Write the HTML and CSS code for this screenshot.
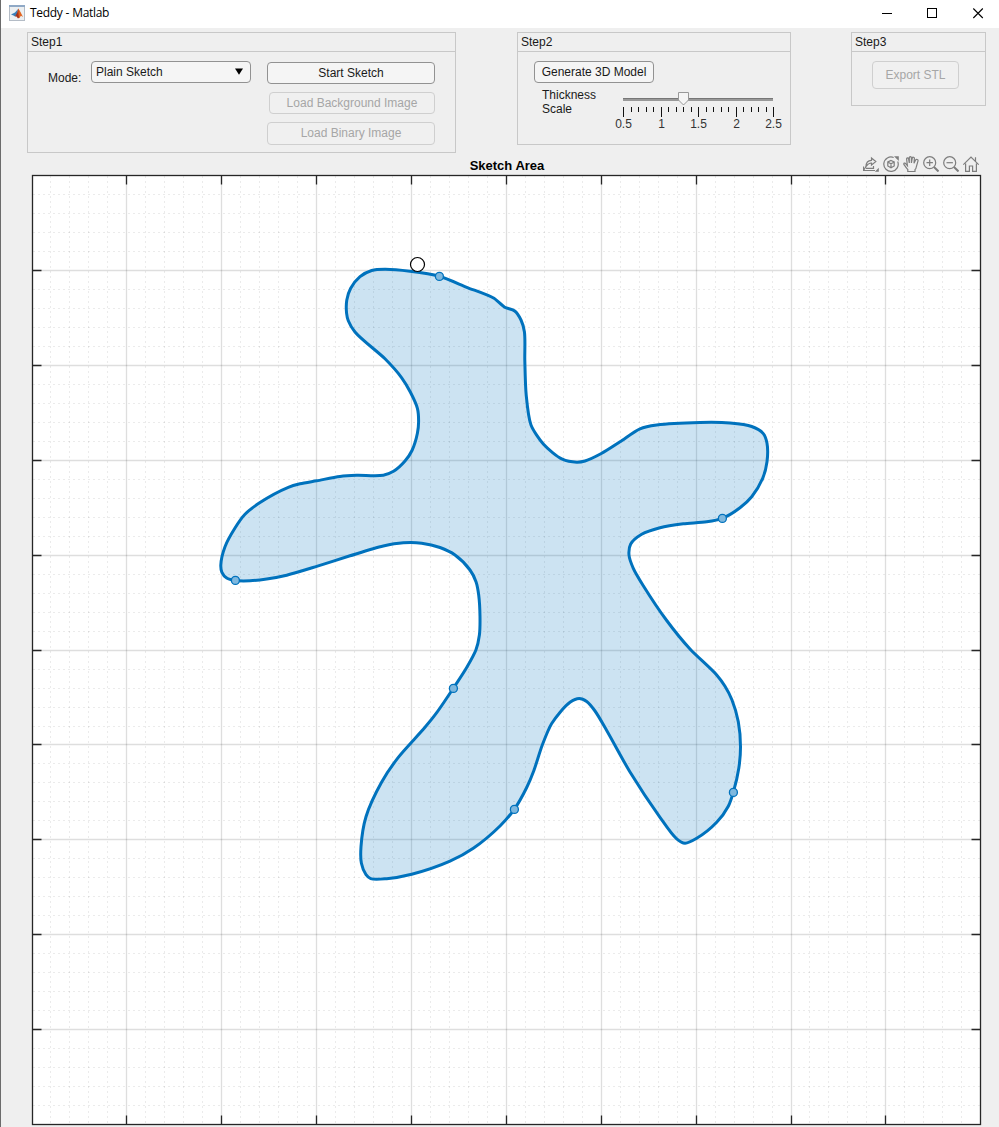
FILE: index.html
```html
<!DOCTYPE html>
<html lang="en">
<head>
    <meta charset="UTF-8">
    <title>Teddy - Matlab</title>
    <link rel="stylesheet" href="styles.css">
</head>
<body>

    <div class="window">
        <div class="titlebar">
            <svg class="app-icon" width="16" height="16" viewBox="0 0 16 16">
                <rect x="0.5" y="0.5" width="15" height="15" fill="#eceff1" stroke="#b4bcc6"/>
                <rect x="0" y="0" width="16" height="2" fill="#8fa9c6"/>
                <path d="M2 9.5 L6 7.5 L9 4 L8 10 L6 11.5 L4.5 10.5 Z" fill="#3b7fb8"/>
                <path d="M6 11.5 L8 8 L9.3 3.6 L10.5 6.5 L11 12 L9 13.5 L7.5 11.5 Z" fill="#a5331b"/>
                <path d="M9.3 3.6 L11.5 7 L14 12 L12 10.8 L10 13.3 L9.5 9 Z" fill="#e2641f"/>
            </svg>
            <span class="caption">Teddy - Matlab</span>
            <svg class="window-buttons" width="104" height="12" viewBox="0 0 104 12">
                <path d="M0 6.5 H10" stroke="#000"/>
                <rect x="45.5" y="1.5" width="9" height="9" fill="none" stroke="#000"/>
                <path d="M91.3 1.5 L100.8 11 M100.8 1.5 L91.3 11" stroke="#000" stroke-width="1.1"/>
            </svg>
        </div>

        <div class="panels">
            <div class="panel step1">
                <div class="panel-title">Step1</div>
                <div class="step1-body">
                    <label class="mode-label">Mode:</label>
                    <div class="dropdown">Plain Sketch
                        <svg width="8" height="7" viewBox="0 0 8 7"><path d="M0 0.5 H8 L4 6.8 Z"/></svg>
                    </div>
                    <div class="buttons">
                        <button>Start Sketch</button>
                        <button class="narrow" disabled>Load Background Image</button>
                        <button class="tall" disabled>Load Binary Image</button>
                    </div>
                </div>
            </div>

            <div class="panel step2">
                <div class="panel-title">Step2</div>
                <div class="step2-body">
                    <button class="generate">Generate 3D Model</button>
                    <div class="thickness">
                        <label>Thickness<br>Scale</label>
                        <svg class="slider" id="slider" width="176" height="42" viewBox="610 90 176 42">
                            <rect x="623" y="98" width="150" height="3" fill="#999"/>
                            <rect x="623" y="98" width="150" height="1" fill="#777"/>
                            <path d="M678.5 92.5 H688.5 V100 L683.5 105 L678.5 100 Z" fill="#f5f5f5" stroke="#999"/>
                        </svg>
                    </div>
                </div>
            </div>

            <div class="panel step3">
                <div class="panel-title">Step3</div>
                <button class="export" disabled>Export STL</button>
            </div>
        </div>

        <div class="axes-header">
            <div class="axes-title">Sketch Area</div>
            <div class="axes-toolbar">
                <!-- export -->
                <svg width="16" height="16" viewBox="0 0 16 16">
                    <path d="M0.5 10.5 V14.5 H12 M0.5 14.5 L3 10.5 M3 12.3 H10.5 V10"/>
                    <path d="M3 10.5 C3 6.5 5 4.5 8.5 4.3 V2 L12.8 5.6 L8.5 9 V7 C6 7 4.5 8.3 3 10.5 Z"/>
                    <path class="solid" d="M15.8 11.8 V15.8 H11.8 Z"/>
                </svg>
                <!-- rotate -->
                <svg width="16" height="16" viewBox="0 0 16 16">
                    <path d="M10.7 1.5 A7.2 7.2 0 1 0 14.7 5.5"/>
                    <path class="solid" d="M11 0.2 H15.8 V5 Z"/>
                    <path d="M8 4.5 L11.2 6 V10 L8 11.8 L4.8 10 V6 Z M4.8 6 L8 7.8 L11.2 6 M8 7.8 V11.8"/>
                </svg>
                <!-- pan -->
                <svg width="16" height="16" viewBox="0 0 16 16">
                    <path d="M4.8 15.5 V13.5 C3.5 12.5 2 10 0.9 8.4 C0.3 7.2 2 6.6 2.7 7.6 L4.4 9.6 L3.6 3 C3.5 1.6 5.3 1.4 5.6 2.8 L6.3 7 V1.7 C6.3 0.3 8.4 0.3 8.4 1.7 V7 L9.3 2 C9.6 0.8 11.5 1 11.4 2.4 L11 7.3 L12.6 4 C13.2 2.9 15.4 3.4 15 4.8 L13.4 10.5 C13.2 12 12.7 13 12 13.6 V15.5 Z"/>
                </svg>
                <!-- zoom in -->
                <svg width="16" height="16" viewBox="0 0 16 16">
                    <circle cx="6.7" cy="6.7" r="6"/>
                    <path d="M3.5 6.7 H9.9 M6.7 3.5 V9.9"/>
                    <path class="handle" d="M11 11 L15.5 15.5"/>
                </svg>
                <!-- zoom out -->
                <svg width="16" height="16" viewBox="0 0 16 16">
                    <circle cx="6.7" cy="6.7" r="6"/>
                    <path d="M3.5 6.7 H9.9"/>
                    <path class="handle" d="M11 11 L15.5 15.5"/>
                </svg>
                <!-- restore view -->
                <svg width="16" height="16" viewBox="0 0 16 16">
                    <path d="M0.3 8.7 L8 1 L15.7 8.7 M12.5 5.5 V1.2 M2.6 7.5 V15.4 H6.4 V10 H9.6 V15.4 H13.4 V7.5"/>
                </svg>
            </div>
        </div>

        <svg class="axes" id="axes" width="951" height="953" viewBox="31 174 951 953">
            <rect x="32.5" y="175.5" width="948" height="949" fill="#fff"/>
            <g id="minorGrid" class="minor-grid"></g>
            <g id="majorGrid" class="major-grid"></g>
            <g id="ticks" class="ticks"></g>
            <rect class="box" x="32.5" y="175.5" width="948" height="949"/>
            <path id="outline" class="outline"/>
            <g id="waypoints" class="waypoints"></g>
            <circle class="cursor" cx="417.5" cy="264.5" r="7"/>
        </svg>
    </div>

    <script src="sketch.js"></script>
</body>
</html>
```
FILE: styles.css
```css
* {
    box-sizing: border-box;
}
body {
    margin: 0;
    font-family: "Liberation Sans", Arial, sans-serif;
    font-size: 12px;
    color: #1a1a1a;
}
.window {
    width: 999px;
    height: 1127px;
    overflow: hidden;
    background: #efefef;
    border-left: 1px solid #6b6b6b;
}
.titlebar {
    display: flex;
    align-items: center;
    height: 28px;
    padding: 0 13px 3px 8px;
    background: #fff;
}
.caption {
    margin-left: 5px;
    font-family: "Open Sans", "Noto Sans", sans-serif;
    font-size: 12px;
    letter-spacing: -0.35px;
    word-spacing: 0.5px;
    color: #000;
}
.window-buttons {
    margin-left: auto;
    fill: none;
}

/* Step panels */
.panels {
    display: flex;
    align-items: flex-start;
    height: 126px;
    padding: 4px 0 0 26px;
}
.panel {
    border: 1px solid #c8c8c8;
}
.panel-title {
    height: 19px;
    padding-left: 3px;
    line-height: 18px;
    border-bottom: 1px solid #c8c8c8;
}
.step1 {
    width: 429px;
    height: 121px;
}
.step2 {
    width: 274px;
    height: 113px;
    margin-left: 61px;
}
.step3 {
    width: 135px;
    height: 74px;
    margin-left: 60px;
}
button {
    display: block;
    width: 168px;
    height: 22px;
    padding: 0;
    font: inherit;
    color: #1a1a1a;
    background: #f5f5f5;
    border: 1px solid #929292;
    border-radius: 4px;
}
button:disabled {
    color: #a6a6a6;
    background: #f0f0f0;
    border-color: #cfcfcf;
}
.step1-body {
    display: flex;
    align-items: flex-start;
    padding: 9px 0 0 20px;
}
.mode-label {
    width: 43px;
    padding-top: 10px;
}
.dropdown {
    display: flex;
    align-items: center;
    justify-content: space-between;
    width: 160px;
    height: 22px;
    padding: 0 7px 1px 4px;
    background: #f5f5f5;
    border: 1px solid #929292;
    border-radius: 4px;
}
.buttons {
    display: flex;
    flex-direction: column;
    align-items: flex-end;
    gap: 8px;
    margin: 1px 0 0 16px;
}
.narrow {
    width: 166px;
}
.tall {
    height: 23px;
    padding-bottom: 2px;
}
.step2-body {
    padding: 9px 0 0 16px;
}
.generate {
    width: 120px;
}
.thickness {
    display: flex;
    padding: 5px 0 0 8px;
    line-height: 14px;
}
.thickness label {
    width: 68px;
}
.slider {
    margin-top: 2px;
}
.slider text {
    font-size: 12px;
    text-anchor: middle;
    fill: #333;
}
.export {
    width: 87px;
    height: 28px;
    margin: 9px 0 0 20px;
}

/* Axes */
.axes-header {
    display: grid;
    grid-template-columns: 1fr auto 1fr;
    align-items: center;
    height: 20px;
    padding: 1px 20px 1px 34px;
}
.axes-title {
    grid-column: 2;
    padding-top: 2px;
    font-size: 13px;
    font-weight: bold;
    color: #000;
}
.axes-toolbar {
    display: flex;
    justify-content: flex-end;
    gap: 4px;
}
.axes-toolbar svg {
    fill: none;
    stroke: #7d7d7d;
    stroke-width: 1.2;
}
.axes-toolbar .solid {
    fill: #7d7d7d;
    stroke: none;
}
.axes-toolbar .handle {
    stroke-width: 2;
}
.axes {
    display: block;
    margin-left: 30px;
}
.minor-grid {
    stroke: #000;
    stroke-opacity: 0.08;
    stroke-dasharray: 2 3;
}
.major-grid {
    stroke: #000;
    stroke-opacity: 0.13;
    stroke-width: 1.3;
}
.ticks, .box {
    fill: none;
    stroke: #262626;
    stroke-width: 1.3;
}
.outline {
    fill: rgba(0, 114, 189, 0.2);
    stroke: #0072bd;
    stroke-width: 3;
    stroke-linejoin: round;
}
.waypoints {
    fill: #7fb8de;
    stroke: #0072bd;
    stroke-width: 1.3;
}
.cursor {
    fill: #fff;
    stroke: #000;
    stroke-width: 1.2;
}
```
FILE: sketch.js
```js
const SVG = "http://www.w3.org/2000/svg";

function add(parent, tag, attrs) {
    const el = document.createElementNS(SVG, tag);
    for (const key in attrs) el.setAttribute(key, attrs[key]);
    parent.appendChild(el);
    return el;
}

// Grid lines and ticks, five minor steps for each major one
const left = 32, top_ = 175, right = 981, bottom = 1125;
const minor = document.getElementById("minorGrid");
const major = document.getElementById("majorGrid");
const ticks = document.getElementById("ticks");
for (let i = 1; i < 50; i++) {
    const x = Math.floor(31.8 + 18.98 * i) + 0.5;
    const y = Math.floor(175.9 + 18.97 * i) + 0.5;
    const group = i % 5 ? minor : major;
    add(group, "path", { d: `M${x} ${top_ + 1} V${bottom}` });
    add(group, "path", { d: `M${left + 1} ${y} H${right}` });
    if (i % 5 === 0) {
        add(ticks, "path", { d: `M${x} ${top_} v9.5 M${x} ${bottom} v-9.5` });
        add(ticks, "path", { d: `M${left} ${y} h9.5 M${right} ${y} h-9.5` });
    }
}

// Slider scale
const slider = document.getElementById("slider");
for (let i = 0; i <= 20; i++) {
    const x = Math.floor(623.5 + 7.5 * i);
    add(slider, "rect", { x: x, y: 107, width: 1, height: i % 5 ? 5 : 10, fill: "#111" });
    if (i % 5 === 0) {
        add(slider, "text", { x: x + 0.5, y: 128 }).textContent = 0.5 + i / 10;
    }
}

// Freehand outline
const points = [
    [439.3, 276.3], [466.7, 287.3], [494, 298.3], [504.7, 307.2], [514.7, 311], [521, 320],
    [524.4, 331.7], [524.8, 360], [526.2, 395], [531, 425], [543.3, 444], [562.3, 459.2],
    [576.7, 462.2], [585, 461], [601.3, 453.5], [620, 441.8], [640, 428.8], [656.7, 425],
    [700, 422.5], [730, 423], [751.7, 426.5], [763.3, 433.6], [767, 443.3], [767, 461.7],
    [762.7, 478.3], [751.7, 496.7], [740, 507.7], [722.3, 518.3], [706.7, 521.8],
    [683.3, 523.8], [660, 527.7], [641.7, 534.3], [630.7, 544], [629, 555], [633.3, 568.3],
    [643.3, 585.7], [666.7, 620.5], [690, 649], [716.7, 675], [725, 686.3], [731.9, 699.8],
    [738.3, 721.7], [740.5, 746.7], [738.8, 768.3], [733.3, 792.3], [728.3, 806.2],
    [716.7, 822.3], [696.7, 838.3], [685, 843.2], [676.7, 838.8], [660, 817.3], [630, 772],
    [606.7, 730.5], [595, 711], [586.7, 701.5], [579.3, 698.5], [570, 702.3],
    [551.7, 723.5], [542.3, 745], [533.8, 770.7], [526.7, 787.5], [514.3, 809.3],
    [500, 826], [473.3, 848.3], [450, 861.2], [411.7, 874.3], [386.7, 878.7],
    [370.7, 878.7], [366, 874.7], [361.4, 863.3], [361, 846.7], [366, 816.7],
    [381.7, 782], [398.3, 757.3], [425, 727.3], [436.7, 712.7], [453.3, 688.3],
    [466.7, 667.5], [475.9, 650], [479.4, 635], [480, 616.7], [478.7, 595],
    [476, 581.7], [470, 570], [455, 555], [440, 547.5], [421.7, 543.2], [403.3, 542.8],
    [383.3, 546], [350, 555.8], [316.7, 566.4], [286.7, 575.2], [266.7, 579],
    [250, 580.8], [235.3, 580.5], [226.7, 578], [221.9, 572.3], [220.8, 565],
    [225, 546.7], [235, 528], [245, 514.3], [260, 502.5], [288.3, 487.3], [300, 483.8],
    [316.7, 480.8], [340, 476.4], [356.7, 475.3], [383.3, 475.2], [393.5, 471.3],
    [405, 461], [412, 450.5], [417.4, 433.3], [418.6, 421.7], [417.4, 408.3],
    [410.3, 392], [401.7, 377.8], [385, 358.8], [355, 332], [348.3, 320.7],
    [346.6, 313.3], [346.8, 300], [350.7, 288.3], [360, 276.7], [371.7, 270.5],
    [385, 269.3], [410, 271.3]
];

// Tangent at a point, halfway between its two segments
function direction(i) {
    const n = points.length;
    const a = points[(i + n - 1) % n], p = points[i], b = points[(i + 1) % n];
    const before = Math.hypot(p[0] - a[0], p[1] - a[1]);
    const after = Math.hypot(b[0] - p[0], b[1] - p[1]);
    const x = (p[0] - a[0]) / before + (b[0] - p[0]) / after;
    const y = (p[1] - a[1]) / before + (b[1] - p[1]) / after;
    const len = Math.hypot(x, y);
    return [x / len, y / len];
}

let d = "M" + points[0];
for (let i = 0; i < points.length; i++) {
    const j = (i + 1) % points.length;
    const p = points[i], q = points[j];
    const u = direction(i), v = direction(j);
    const h = Math.hypot(q[0] - p[0], q[1] - p[1]) / 4;
    d += ` C${p[0] + u[0] * h} ${p[1] + u[1] * h} ${q[0] - v[0] * h} ${q[1] - v[1] * h} ${q}`;
}
document.getElementById("outline").setAttribute("d", d + "Z");

const waypoints = document.getElementById("waypoints");
[[439.4, 276.4], [722.4, 518.4], [733.4, 792.4], [514.4, 809.4], [453.4, 688.4], [235.4, 580.4]]
    .forEach(([cx, cy]) => add(waypoints, "circle", { cx, cy, r: 4 }));
```
